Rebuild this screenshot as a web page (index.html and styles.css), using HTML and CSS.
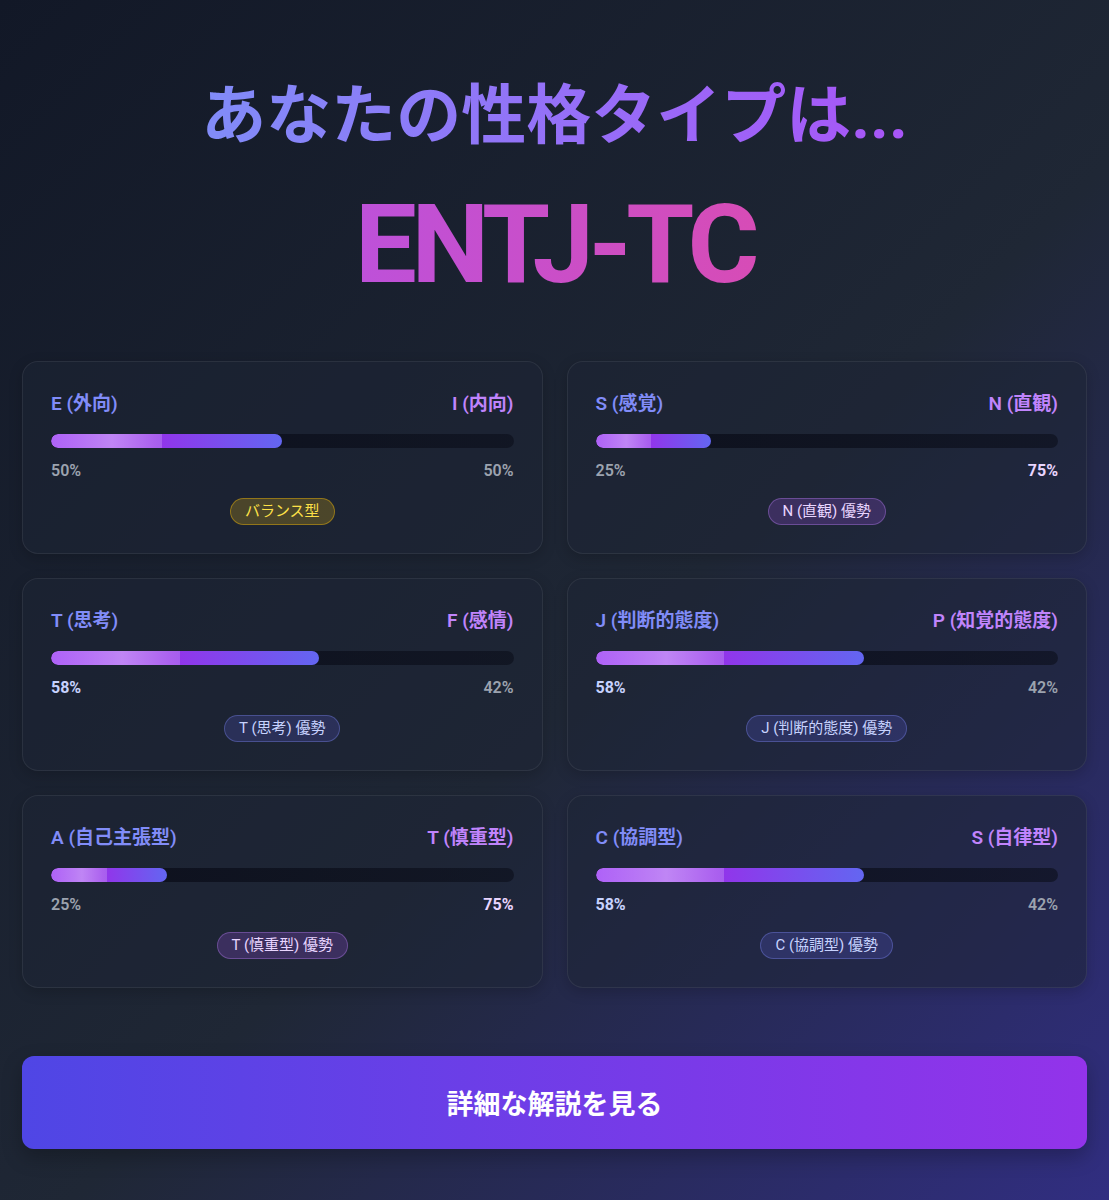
FILE: index.html
```html
<!DOCTYPE html>
<html lang="ja">
<head>
<meta charset="utf-8">
<title>性格タイプ結果</title>
<link rel="stylesheet" href="styles.css">
</head>
<body>
<main class="page">
  <header class="hero">
    <h1 class="hero-title"><span class="hero-title-text">あなたの性格タイプは...</span></h1>
    <div class="type-code">ENTJ-TC</div>
  </header>

  <section class="grid">
    <article class="card">
      <div class="row labels"><span class="lbl-left">E (外向)</span><span class="lbl-right">I (内向)</span></div>
      <div class="track"><div class="fill" style="width:50%"><span class="shine"></span></div></div>
      <div class="row pcts"><span class="pct">50%</span><span class="pct">50%</span></div>
      <div class="badge-wrap"><span class="badge badge-balance">バランス型</span></div>
    </article>

    <article class="card">
      <div class="row labels"><span class="lbl-left">S (感覚)</span><span class="lbl-right">N (直観)</span></div>
      <div class="track"><div class="fill" style="width:25%"><span class="shine"></span></div></div>
      <div class="row pcts"><span class="pct">25%</span><span class="pct pct-right-strong">75%</span></div>
      <div class="badge-wrap"><span class="badge badge-right">N (直観) 優勢</span></div>
    </article>

    <article class="card">
      <div class="row labels"><span class="lbl-left">T (思考)</span><span class="lbl-right">F (感情)</span></div>
      <div class="track"><div class="fill" style="width:58%"><span class="shine"></span></div></div>
      <div class="row pcts"><span class="pct pct-left-strong">58%</span><span class="pct">42%</span></div>
      <div class="badge-wrap"><span class="badge badge-left">T (思考) 優勢</span></div>
    </article>

    <article class="card">
      <div class="row labels"><span class="lbl-left">J (判断的態度)</span><span class="lbl-right">P (知覚的態度)</span></div>
      <div class="track"><div class="fill" style="width:58%"><span class="shine"></span></div></div>
      <div class="row pcts"><span class="pct pct-left-strong">58%</span><span class="pct">42%</span></div>
      <div class="badge-wrap"><span class="badge badge-left">J (判断的態度) 優勢</span></div>
    </article>

    <article class="card">
      <div class="row labels"><span class="lbl-left">A (自己主張型)</span><span class="lbl-right">T (慎重型)</span></div>
      <div class="track"><div class="fill" style="width:25%"><span class="shine"></span></div></div>
      <div class="row pcts"><span class="pct">25%</span><span class="pct pct-right-strong">75%</span></div>
      <div class="badge-wrap"><span class="badge badge-right">T (慎重型) 優勢</span></div>
    </article>

    <article class="card">
      <div class="row labels"><span class="lbl-left">C (協調型)</span><span class="lbl-right">S (自律型)</span></div>
      <div class="track"><div class="fill" style="width:58%"><span class="shine"></span></div></div>
      <div class="row pcts"><span class="pct pct-left-strong">58%</span><span class="pct">42%</span></div>
      <div class="badge-wrap"><span class="badge badge-left">C (協調型) 優勢</span></div>
    </article>
  </section>

  <button class="cta" type="button">詳細な解説を見る</button>
</main>
</body>
</html>
```

FILE: styles.css
```css
* { box-sizing: border-box; }

html, body {
  margin: 0;
  padding: 0;
}

body {
  min-height: 1200px;
  font-family: Roboto, "Noto Sans CJK JP", "Noto Sans", sans-serif;
  color: #e5e7eb;
  background: linear-gradient(135deg, #121827 0%, #1f2735 55%, #312e81 100%);
}

.page {
  padding: 78px 22px 51px;
}

.hero {
  text-align: center;
}

.hero-title {
  margin: 0;
  font-size: 65px;
  line-height: 77px;
  font-weight: 700;
}

.hero-title-text {
  display: inline-block;
  background: linear-gradient(90deg, #818cf8, #a855f7);
  -webkit-background-clip: text;
  background-clip: text;
  color: transparent;
}

.type-code {
  margin-top: 35px;
  font-size: 110px;
  line-height: 110px;
  font-weight: 700;
  letter-spacing: -0.05em;
  background: linear-gradient(90deg, #a855f7, #ec4899);
  -webkit-background-clip: text;
  background-clip: text;
  color: transparent;
}

.grid {
  margin-top: 61px;
  display: grid;
  grid-template-columns: 1fr 1fr;
  column-gap: 24px;
  row-gap: 24px;
}

.card {
  height: 193px;
  padding: 28px 28px 0;
  border-radius: 16px;
  background: rgba(30, 37, 53, 0.55);
  border: 1px solid rgba(255, 255, 255, 0.07);
  box-shadow: 0 4px 14px rgba(0, 0, 0, 0.18);
}

.row {
  display: flex;
  justify-content: space-between;
  align-items: center;
}

.labels {
  font-size: 19px;
  line-height: 27px;
  font-weight: 600;
}

.lbl-left { color: #818cf8; }
.lbl-right { color: #c084fc; }

.track {
  margin-top: 17px;
  height: 14px;
  border-radius: 999px;
  background: linear-gradient(90deg, rgba(8, 10, 22, 0.75), rgba(10, 13, 25, 0.6));
  overflow: hidden;
}

.fill {
  position: relative;
  height: 100%;
  border-radius: 999px;
  background: linear-gradient(90deg, #a855f7 0%, #9333ea 45%, #6366f1 100%);
  overflow: hidden;
}

.shine {
  position: absolute;
  left: 0;
  top: 0;
  bottom: 0;
  width: 48%;
  background: linear-gradient(90deg, rgba(255, 255, 255, 0.08) 0%, rgba(255, 255, 255, 0.36) 55%, rgba(255, 255, 255, 0.2) 100%);
}

.pcts {
  margin-top: 13px;
  font-size: 16px;
  line-height: 20px;
  font-weight: 600;
}

.pct { color: #9ca3af; }
.pct-left-strong { color: #c7d2fe; font-weight: 700; }
.pct-right-strong { color: #e9d5ff; font-weight: 700; }

.badge-wrap {
  margin-top: 17px;
  text-align: center;
}

.badge {
  display: inline-block;
  padding: 2px 14px;
  font-size: 15px;
  line-height: 21px;
  font-weight: 400;
  border-radius: 999px;
  border: 1px solid;
}

.badge-balance {
  color: #fde047;
  background: rgba(202, 160, 20, 0.28);
  border-color: rgba(234, 179, 8, 0.45);
}

.badge-left {
  color: #c7d2fe;
  background: rgba(99, 102, 241, 0.2);
  border-color: rgba(129, 140, 248, 0.35);
}

.badge-right {
  color: #e9d5ff;
  background: rgba(168, 85, 247, 0.22);
  border-color: rgba(192, 132, 252, 0.35);
}

.cta {
  display: block;
  width: 100%;
  margin-top: 68px;
  height: 93px;
  border: 0;
  border-radius: 12px;
  background: linear-gradient(90deg, #4f46e5, #9333ea);
  color: #ffffff;
  font-family: Roboto, "Noto Sans CJK JP", sans-serif;
  font-size: 27px;
  font-weight: 700;
  box-shadow: 0 8px 20px rgba(0, 0, 0, 0.25);
  cursor: pointer;
}
```
